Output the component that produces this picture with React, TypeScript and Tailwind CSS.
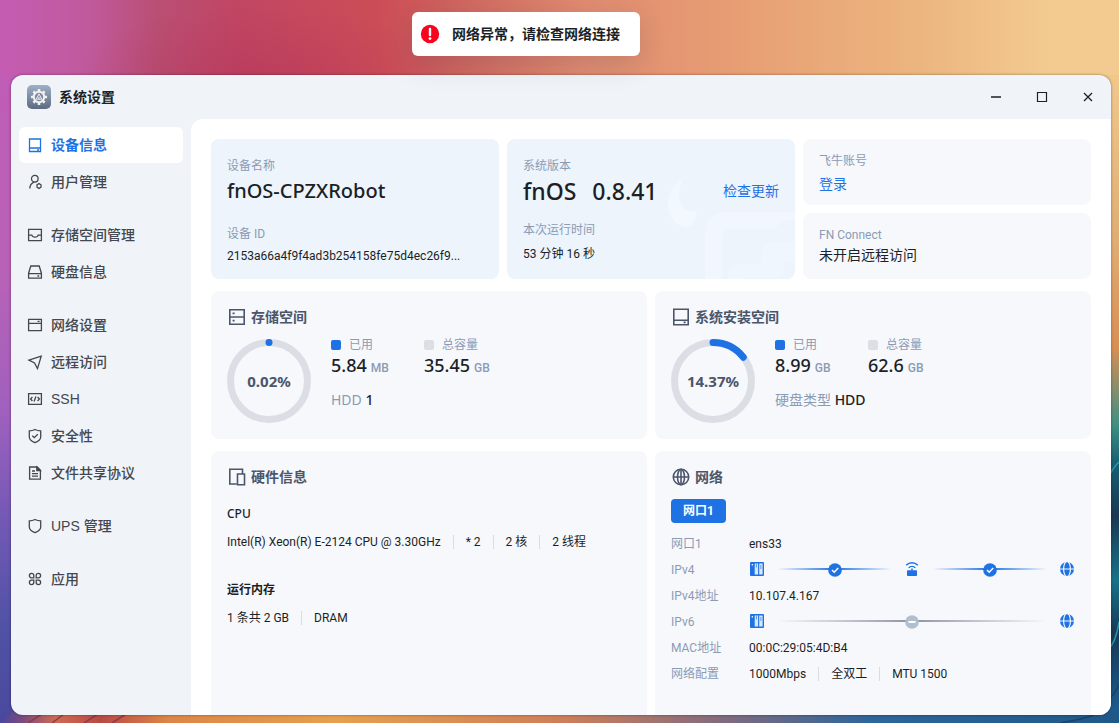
import type { ReactNode } from "react";
import clsx from "clsx";

function Stroke({ children }: { children: ReactNode }) {
  return (
    <svg viewBox="0 0 16 16" fill="none" stroke="currentColor" strokeWidth="1.3" className="size-4 shrink-0" aria-hidden="true">
      {children}
    </svg>
  );
}

const DeviceIcon = () => (
  <Stroke>
    <path d="M2.5 2h11v12.5h-11zM2.5 11h11M10 12.8h2" />
  </Stroke>
);

const UserIcon = () => (
  <Stroke>
    <circle cx="7.8" cy="4.7" r="3.3" />
    <path d="M2.8 14.6c0-3 1.5-5.2 4.2-6.4" />
    <path d="M12 9.6l2 1.2v2.4l-2 1.2-2-1.2v-2.4z" />
  </Stroke>
);

const InboxIcon = () => (
  <Stroke>
    <path d="M1.6 2.3h12.8v11.4H1.6zM1.6 8.2h3.2c.3 1.2 1.4 2 3.2 2s2.9-.8 3.2-2h3.2" />
  </Stroke>
);

const DiskIcon = () => (
  <Stroke>
    <path d="M3.8 2h8.4l2.2 7.2v5H1.6v-5zM1.6 9.6h12.8M10.4 12h1.8" />
  </Stroke>
);

const NetworkIcon = () => (
  <Stroke>
    <path d="M1.6 2.3h12.8v11.4H1.6zM1.6 6.3h12.8M10.6 4.4h2" />
  </Stroke>
);

const RemoteIcon = () => (
  <Stroke>
    <path d="M14.2 2.2L1.9 6.1l5.6 2.9 3 5.6z" />
  </Stroke>
);

const SshIcon = () => (
  <Stroke>
    <path d="M1.6 2.6h12.8v10.8H1.6zM5.4 6L3.6 8l1.8 2M10.6 6l1.8 2-1.8 2M8.9 5.6l-1.8 4.8" />
  </Stroke>
);

const ShieldIcon = ({ checked = false }: { checked?: boolean }) => (
  <Stroke>
    <path d="M8 1.5c1.8 1 3.7 1.4 5.7 1.4v6c0 2.6-2.4 4.4-5.7 5.8-3.3-1.4-5.7-3.2-5.7-5.8v-6c2 0 3.9-.4 5.7-1.4z" />
    {checked && <path d="M5.3 7.7l2 2 3.5-3.5" />}
  </Stroke>
);

const FileIcon = () => (
  <Stroke>
    <path d="M2.6 2h7.6l3.2 3.2v9H2.6zM5 6h3M5 8.6h6M5 11.2h6" />
    <path d="M9.8 2v3.6h3.6z" fill="currentColor" />
  </Stroke>
);

const AppsIcon = () => (
  <Stroke>
    <path d="M6.8 6.8H4.5a2.2 2.2 0 1 1 2.3-2.3zM9.2 6.8h2.3a2.2 2.2 0 1 0-2.3-2.3zM6.8 9.2H4.5a2.2 2.2 0 1 0 2.3 2.3zM9.2 9.2h2.3a2.2 2.2 0 1 1-2.3 2.3z" />
  </Stroke>
);

function Stroke20({ children }: { children: ReactNode }) {
  return (
    <svg viewBox="0 0 20 20" fill="none" stroke="currentColor" strokeWidth="1.6" className="size-5 shrink-0" aria-hidden="true">
      {children}
    </svg>
  );
}

const StorageIcon = () => (
  <Stroke20>
    <path d="M2.8 2.8h14.4v14.4H2.8zM2.8 10h14.4M5.6 6.4h2M5.6 13.6h2" />
  </Stroke20>
);

const SystemDiskIcon = () => (
  <Stroke20>
    <path d="M2.8 2.3h14.4v15.4H2.8zM2.8 13.2h14.4M12.6 15.4h2" />
  </Stroke20>
);

const HardwareIcon = () => (
  <Stroke20>
    <path d="M9.5 17H2.8V2.3h12.7v4.5M10.5 7h7v10.7h-7z" />
  </Stroke20>
);

const GlobeIcon = () => (
  <Stroke20>
    <circle cx="10" cy="10" r="7.7" />
    <ellipse cx="10" cy="10" rx="3.5" ry="7.7" />
    <path d="M2.3 10h15.4M10 2.3v15.4" />
  </Stroke20>
);

const NasIcon = () => (
  <svg viewBox="0 0 16 16" className="size-4 shrink-0" aria-hidden="true">
    <rect x="1" y="1" width="14" height="14" rx="1" fill="#1f72e3" />
    <path d="M5.7 2.5h3.4v11H5.7zM10.2 2.5h3.4v11h-3.4z" fill="#d9e8fc" />
    <path d="M3.3 3v1.4" stroke="#fff" strokeWidth="1.2" />
    <path d="M7.4 2.5v4M11.9 4v4" stroke="#5b98ec" strokeWidth="1" />
  </svg>
);

const RouterIcon = () => (
  <svg viewBox="0 0 16 16" fill="none" stroke="#1f72e3" strokeWidth="1.5" className="size-4 shrink-0" aria-hidden="true">
    <path d="M2.2 4.2a8.2 8.2 0 0 1 11.6 0M4.7 6.7a4.8 4.8 0 0 1 6.600 0" />
    <path d="M8 7.5v3" />
    <rect x="3" y="9.2" width="10" height="5.800" rx=".8" fill="#1f72e3" stroke="none" />
  </svg>
);

const WebIcon = () => (
  <svg viewBox="0 0 16 16" className="size-4 shrink-0" aria-hidden="true">
    <circle cx="8" cy="8" r="7" fill="#1f72e3" />
    <g fill="none" stroke="#f7f8fc" strokeWidth="1.2">
      <ellipse cx="8" cy="8" rx="3.4" ry="7.6" />
      <path d="M1 8h14" />
    </g>
  </svg>
);

function SettingsLogo() {
  const teeth = [0, 45, 90, 135, 180, 225, 270, 315];
  return (
    <svg viewBox="0 0 24 24" className="size-6" aria-hidden="true">
      <defs>
        <linearGradient id="logo" x1="0" y1="0" x2="0" y2="1">
          <stop stopColor="#9db0c8" />
          <stop offset="1" stopColor="#5e6b80" />
        </linearGradient>
      </defs>
      <rect width="24" height="24" rx="5" fill="url(#logo)" />
      {teeth.map((angle) => (
        <rect key={angle} x="10.7" y="4" width="2.6" height="3.5" rx=".5" fill="#f1f1f1" transform={`rotate(${angle} 12 12)`} />
      ))}
      <circle cx="12" cy="12" r="5.2" fill="#7d8a9f" stroke="#f1f1f1" strokeWidth="2" />
      <path d="M12 8.8l-2.8 5.4h5.6zM12 11.8v2.4" fill="none" stroke="#f1f1f1" strokeWidth="1" />
    </svg>
  );
}

function Wallpaper() {
  return (
    <svg viewBox="0 0 1119 723" preserveAspectRatio="none" className="absolute inset-0 -z-10 size-full" aria-hidden="true">
      <defs>
        <linearGradient id="sky">
          <stop stopColor="#c45cb2" />
          <stop offset=".08" stopColor="#c05a9c" />
          <stop offset=".14" stopColor="#b94f74" />
          <stop offset=".21" stopColor="#c14663" />
          <stop offset=".34" stopColor="#cc4d56" />
          <stop offset=".42" stopColor="#d16a60" />
          <stop offset=".52" stopColor="#e18b70" />
          <stop offset=".66" stopColor="#e79e73" />
          <stop offset=".82" stopColor="#ecb57f" />
          <stop offset=".93" stopColor="#f2c98f" />
          <stop offset="1" stopColor="#f3cb90" />
        </linearGradient>
        <radialGradient id="dusk">
          <stop stopColor="#b03058" stopOpacity=".45" />
          <stop offset="1" stopColor="#b03058" stopOpacity="0" />
        </radialGradient>
        <linearGradient id="left" x1="0" y1="0" x2="0" y2="1">
          <stop stopColor="#c05cb6" />
          <stop offset=".3" stopColor="#b862b6" />
          <stop offset=".52" stopColor="#a060bf" />
          <stop offset=".68" stopColor="#7459b5" />
          <stop offset=".85" stopColor="#5052a6" />
          <stop offset="1" stopColor="#4a489c" />
        </linearGradient>
        <linearGradient id="right" x1="0" y1="0" x2="0" y2="1">
          <stop stopColor="#f1c78c" />
          <stop offset=".25" stopColor="#e0ae75" />
          <stop offset=".42" stopColor="#d98e55" />
          <stop offset=".54" stopColor="#3f8f82" />
          <stop offset=".6" stopColor="#165f75" />
          <stop offset=".68" stopColor="#1a3853" />
          <stop offset=".78" stopColor="#17738a" />
          <stop offset=".86" stopColor="#173a58" />
          <stop offset="1" stopColor="#1d5f96" />
        </linearGradient>
        <linearGradient id="floor">
          <stop stopColor="#4a489c" />
          <stop offset=".02" stopColor="#7a4a80" />
          <stop offset=".05" stopColor="#d06a52" />
          <stop offset=".09" stopColor="#b84a45" />
          <stop offset=".15" stopColor="#dd8547" />
          <stop offset=".3" stopColor="#e6a04f" />
          <stop offset=".5" stopColor="#cf7f58" />
          <stop offset=".65" stopColor="#7f6a80" />
          <stop offset=".78" stopColor="#2c669a" />
          <stop offset="1" stopColor="#1f5888" />
        </linearGradient>
      </defs>
      <path d="M0 0h1119v100H0z" fill="url(#sky)" />
      <ellipse cx="260" cy="80" rx="190" ry="75" fill="url(#dusk)" />
      <path d="M0 75h40v648H0z" fill="url(#left)" />
      <path d="M1080 75h39v648h-39z" fill="url(#right)" />
      <path d="M0 723l14-12h1105v12z" fill="url(#floor)" />
      <g fill="none" strokeWidth="1.5">
        <path d="M28 723l14-9M52 723l12-9M84 723l14-9M112 723l14-9" stroke="#8f3b48" />
        <path d="M1108 478q6-12 11-16M1108 650q8-8 11-28" stroke="#2399ab" />
        <path d="M1108 700q7-6 11-16M1060 723q20-3 34-8" stroke="#174468" />
      </g>
    </svg>
  );
}

function Toast() {
  return (
    <div
      role="alert"
      className="absolute top-3 left-[412px] z-10 flex h-11 items-center gap-3 rounded-md bg-white pr-5 pl-2 text-sm font-semibold text-[#1c1f26] shadow-[0_8px_28px_rgba(40,50,80,0.16)]"
    >
      <svg viewBox="0 0 20 20" className="size-5" aria-hidden="true">
        <circle cx="10" cy="10" r="9.2" fill="#f9041f" />
        <path d="M10 5v6" stroke="#fff" strokeWidth="2.4" strokeLinecap="round" />
        <circle cx="10" cy="14.6" r="1.4" fill="#fff" />
      </svg>
      <span>网络异常，请检查网络连接</span>
    </div>
  );
}

const navGroups = [
  [
    { label: "设备信息", icon: <DeviceIcon />, active: true },
    { label: "用户管理", icon: <UserIcon /> },
  ],
  [
    { label: "存储空间管理", icon: <InboxIcon /> },
    { label: "硬盘信息", icon: <DiskIcon /> },
  ],
  [
    { label: "网络设置", icon: <NetworkIcon /> },
    { label: "远程访问", icon: <RemoteIcon /> },
    { label: "SSH", icon: <SshIcon /> },
    { label: "安全性", icon: <ShieldIcon checked /> },
    { label: "文件共享协议", icon: <FileIcon /> },
  ],
  [{ label: "UPS 管理", icon: <ShieldIcon /> }],
  [{ label: "应用", icon: <AppsIcon /> }],
];

function TitleBar() {
  const button = "flex h-full w-[46px] items-center justify-center";
  return (
    <header className="flex h-11 shrink-0 items-center pl-4 text-[#1c1f26]">
      <SettingsLogo />
      <h1 className="ml-2 flex-1 text-sm font-semibold">系统设置</h1>
      <button type="button" aria-label="最小化" className={button}>
        <svg viewBox="0 0 12 12" className="size-3" stroke="currentColor">
          <path d="M1 6h10" strokeWidth="1.3" />
        </svg>
      </button>
      <button type="button" aria-label="最大化" className={button}>
        <svg viewBox="0 0 12 12" className="size-3" fill="none" stroke="currentColor">
          <path d="M1.5 1.5h9v9h-9z" strokeWidth="1.2" />
        </svg>
      </button>
      <button type="button" aria-label="关闭" className={button}>
        <svg viewBox="0 0 12 12" className="size-3" stroke="currentColor">
          <path d="M2 2l8 8M10 2l-8 8" strokeWidth="1.3" />
        </svg>
      </button>
    </header>
  );
}

function Sidebar() {
  return (
    <nav className="flex w-[180px] shrink-0 flex-col gap-[17px] px-2 pt-2 font-['Liberation_Sans','Noto_Sans_CJK_SC',sans-serif]">
      {navGroups.map((group) => (
        <ul key={group[0].label} className="flex flex-col gap-px">
          {group.map((item) => (
            <li key={item.label}>
              <button
                type="button"
                className={clsx(
                  "flex h-9 w-full items-center gap-2 rounded-md px-2 text-sm",
                  item.active ? "bg-white font-bold text-[#1f72e3]" : "font-medium text-[#44474d]",
                )}
              >
                {item.icon}
                {item.label}
              </button>
            </li>
          ))}
        </ul>
      ))}
    </nav>
  );
}

// Small print is set in Roboto, headings and figures keep the page font
const small = "font-['Roboto','Noto_Sans_CJK_SC',sans-serif] text-xs leading-5";

function Label({ children }: { children: ReactNode }) {
  return <p className={clsx(small, "text-[#8b9bb4]")}>{children}</p>;
}

function Card({ title, icon, children }: { title: string; icon: ReactNode; children: ReactNode }) {
  return (
    <section className="rounded-lg bg-[#f7f8fc] px-4 pt-3.5 pb-4">
      <h2 className="flex h-6 items-center gap-1 text-sm font-semibold text-[#4b566b]">
        {icon}
        {title}
      </h2>
      {children}
    </section>
  );
}

function Ring({ percent }: { percent: number }) {
  const length = 2 * Math.PI * 38.5;
  return (
    <div className="relative flex size-[84px] shrink-0 items-center justify-center text-[15px] font-bold text-[#4b566b]">
      <svg viewBox="0 0 84 84" fill="none" strokeWidth="7" className="absolute inset-0 -rotate-90" aria-hidden="true">
        <circle cx="42" cy="42" r="38.5" stroke="#dcdee5" />
        <circle
          cx="42"
          cy="42"
          r="38.5"
          stroke="#1f72e3"
          strokeLinecap="round"
          strokeDasharray={`${(length * percent) / 100} ${length}`}
        />
      </svg>
      <span className="relative">{percent}%</span>
    </div>
  );
}

function Amount({ label, value, unit, used = false }: { label: string; value: string; unit: string; used?: boolean }) {
  return (
    <div className="min-w-[93px]">
      <div className="flex items-center gap-2">
        <span className={clsx("size-2.5 rounded-xs", used ? "bg-[#1f72e3]" : "bg-[#dcdee5]")} />
        <Label>{label}</Label>
      </div>
      <p className="flex h-5 items-baseline gap-1 text-lg leading-5 font-medium text-[#1c1f26]">
        {value}
        <span className={clsx(small, "font-medium text-[#8b9bb4]")}>{unit}</span>
      </p>
    </div>
  );
}

type UsageProps = {
  percent: number;
  used: [string, string];
  total: [string, string];
  diskLabel: string;
  diskValue: string;
};

function Usage({ percent, used, total, diskLabel, diskValue }: UsageProps) {
  return (
    <div className="mt-2.5 flex gap-5">
      <Ring percent={percent} />
      <div className="-mt-1">
        <div className="flex">
          <Amount label="已用" value={used[0]} unit={used[1]} used />
          <Amount label="总容量" value={total[0]} unit={total[1]} />
        </div>
        <p className="mt-[15px] text-sm leading-5 text-[#8b9bb4]">
          {diskLabel} <span className="font-medium text-[#1c1f26]">{diskValue}</span>
        </p>
      </div>
    </div>
  );
}

function Pieces({ items }: { items: string[] }) {
  return (
    <ul className={clsx(small, "flex items-center")}>
      {items.map((item) => (
        <li
          key={item}
          className="flex items-center not-first:before:mx-3 not-first:before:h-3.5 not-first:before:w-px not-first:before:bg-[#d9dce3]"
        >
          {item}
        </li>
      ))}
    </ul>
  );
}

function Link({ ok = false }: { ok?: boolean }) {
  return (
    <span className="relative mx-3 flex-1">
      <span
        className={clsx(
          "block h-0.5 bg-linear-to-r from-transparent to-transparent",
          ok ? "via-[#1f72e3]" : "via-[#8f93a8]",
        )}
      />
      <svg viewBox="0 0 14 14" fill="none" stroke="#fff" className="absolute -top-[5px] left-1/2 -ml-[7px] size-3.5" aria-hidden="true">
        <circle cx="7" cy="7" r="6.8" fill={ok ? "#1f72e3" : "#afbfcf"} stroke="none" />
        <path d={ok ? "M4 7l2.2 2.2 4-4.2" : "M3.5 7h7"} strokeWidth={ok ? 1.5 : 2} />
      </svg>
    </span>
  );
}

const networkRows: { label: string; value: ReactNode }[] = [
  { label: "网口1", value: "ens33" },
  {
    label: "IPv4",
    value: (
      <div className="flex flex-1 items-center pb-0.5">
        <NasIcon />
        <Link ok />
        <RouterIcon />
        <Link ok />
        <WebIcon />
      </div>
    ),
  },
  { label: "IPv4地址", value: "10.107.4.167" },
  {
    label: "IPv6",
    value: (
      <div className="flex flex-1 items-center pb-0.5">
        <NasIcon />
        <Link />
        <WebIcon />
      </div>
    ),
  },
  { label: "MAC地址", value: "00:0C:29:05:4D:B4" },
  { label: "网络配置", value: <Pieces items={["1000Mbps", "全双工", "MTU 1500"]} /> },
];

function Overview() {
  return (
    <div className="grid grid-cols-3 gap-2">
      <section className="h-[140px] rounded-lg bg-[#edf4fc] px-4 pt-[17px]">
        <Label>设备名称</Label>
        <p className="mt-px text-xl font-medium">fnOS-CPZXRobot</p>
        <div className="mt-[19px]">
          <Label>设备 ID</Label>
        </div>
        <p className={clsx(small, "mt-0.5")}>2153a66a4f9f4ad3b254158fe75d4ec26f9...</p>
      </section>
      <section className="relative h-[140px] overflow-hidden rounded-lg bg-[#edf4fc] px-4 pt-[17px]">
        <svg viewBox="0 0 130 110" className="absolute right-0 bottom-0 h-[110px] w-[130px]" fill="#f3f7fe" aria-hidden="true">
          <path d="M18 9C-2 22-4 49 20 59l6-1c3-6 5-10 6-16-12 3-24-8-14-33z" />
          <path d="M130 43H62Q40 43 40 66v44h17V70q0-10 10-10h42q7-9 21-10z" fillOpacity=".8" />
          <path d="M130 73h-23q-10 0-10 10v4q0 8-8 8h-16q-10 0-10 9v6h17v-1h33q6 0 6-6V93h11z" fillOpacity=".5" />
        </svg>
        <Label>系统版本</Label>
        <div className="relative mt-px flex h-7 items-center">
          <p className="flex flex-1 gap-4 text-[23px] leading-7 font-medium">
            <span>fnOS</span>
            <span>0.8.41</span>
          </p>
          <a href="#update" className="text-sm text-[#1f72e3]">
            检查更新
          </a>
        </div>
        <div className="mt-[15px]">
          <Label>本次运行时间</Label>
        </div>
        <p className={clsx(small, "mt-1")}>53 分钟 16 秒</p>
      </section>
      <div className="grid grid-rows-2 gap-2">
        <section className="rounded-lg bg-[#f7f8fc] px-4 pt-3">
          <Label>飞牛账号</Label>
          <a href="#login" className="mt-[3px] block text-sm text-[#1f72e3]">
            登录
          </a>
        </section>
        <section className="rounded-lg bg-[#f7f8fc] px-4 pt-3">
          <Label>FN Connect</Label>
          <p className="text-sm">未开启远程访问</p>
        </section>
      </div>
    </div>
  );
}

export default function App() {
  return (
    <div className="relative isolate flex h-screen flex-col overflow-hidden pt-[75px] pr-2 pb-2 pl-[11px] font-['Noto_Sans','Noto_Sans_CJK_SC',sans-serif]">
      <Wallpaper />
      <Toast />
      <div className="flex min-h-0 flex-1 flex-col overflow-hidden rounded-xl bg-[#f0f4f9] shadow-[0_0_3px_rgba(0,0,0,0.4)]">
        <TitleBar />
        <div className="flex min-h-0 flex-1">
          <Sidebar />
          <main className="flex min-w-0 flex-1 flex-col gap-3 overflow-hidden rounded-tl-xl bg-white px-5 pt-5 text-[#1c1f26]">
            <Overview />
            <div className="grid grid-cols-2 gap-2">
              <Card title="存储空间" icon={<StorageIcon />}>
                <Usage percent={0.02} used={["5.84", "MB"]} total={["35.45", "GB"]} diskLabel="HDD" diskValue="1" />
              </Card>
              <Card title="系统安装空间" icon={<SystemDiskIcon />}>
                <Usage percent={14.37} used={["8.99", "GB"]} total={["62.6", "GB"]} diskLabel="硬盘类型" diskValue="HDD" />
              </Card>
            </div>
            <div className="grid min-h-[320px] grid-cols-2 gap-2">
              <Card title="硬件信息" icon={<HardwareIcon />}>
                <h3 className="mt-[15px] mb-2 text-xs leading-5 font-medium">CPU</h3>
                <Pieces items={["Intel(R) Xeon(R) E-2124 CPU @ 3.30GHz", "* 2", "2 核", "2 线程"]} />
                <h3 className="mt-7 mb-2 text-xs leading-5 font-semibold">运行内存</h3>
                <Pieces items={["1 条共 2 GB", "DRAM"]} />
              </Card>
              <Card title="网络" icon={<GlobeIcon />}>
                <button type="button" className={clsx(small, "mt-2.5 block h-6 rounded-sm bg-[#1f72e3] px-3 font-bold text-white")}>
                  网口1
                </button>
                <dl className={clsx(small, "mt-2")}>
                  {networkRows.map((row) => (
                    <div key={row.label} className="flex h-[26px] items-center">
                      <dt className="w-[78px] shrink-0 text-[#8b9bb4]">{row.label}</dt>
                      <dd className="flex flex-1 items-center">{row.value}</dd>
                    </div>
                  ))}
                </dl>
              </Card>
            </div>
          </main>
        </div>
      </div>
    </div>
  );
}
